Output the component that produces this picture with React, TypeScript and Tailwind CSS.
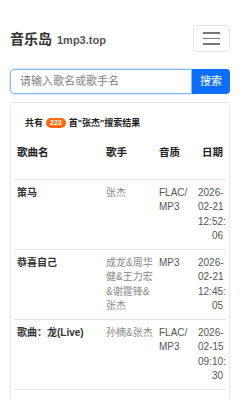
import React from "react";

const songs = [
  {
    name: "策马",
    artist: ["张杰"],
    quality: ["FLAC/", "MP3"],
    date: ["2026-", "02-21", "12:52:", "06"],
  },
  {
    name: "恭喜自己",
    artist: ["成龙&周华", "健&王力宏", "&谢霆锋&", "张杰"],
    quality: ["MP3"],
    date: ["2026-", "02-21", "12:45:", "05"],
  },
  {
    name: "歌曲：龙(Live)",
    artist: ["孙楠&张杰"],
    quality: ["FLAC/", "MP3"],
    date: ["2026-", "02-15", "09:10:", "30"],
  },
];

function Lines({ items }: { items: string[] }) {
  return (
    <>
      {items.map((t, i) => (
        <span key={i} className="block whitespace-nowrap">
          {t}
        </span>
      ))}
    </>
  );
}

export default function App() {
  return (
    <div className="w-[240px] h-[400px] overflow-hidden bg-white font-['Liberation_Sans','Noto_Sans_CJK_SC',sans-serif] text-[#333]">
      {/* Navbar */}
      <header className="flex items-center justify-between px-[10px] pt-[25px]">
        <a className="flex items-baseline gap-[5px] pt-[2px]">
          <span className="text-[14px] font-bold leading-[18px] text-[#333]">
            音乐岛
          </span>
          <span className="text-[11px] font-bold text-[#555]">1mp3.top</span>
        </a>
        <button className="flex h-[27px] w-[37px] flex-col items-center justify-center gap-[4px] rounded-[4px] border border-[#e6e6e6]">
          <span className="block h-[1.5px] w-[17px] bg-[#777]" />
          <span className="block h-[1.5px] w-[17px] bg-[#777]" />
          <span className="block h-[1.5px] w-[17px] bg-[#777]" />
        </button>
      </header>

      {/* Search */}
      <form className="mx-[10px] mt-[17px] flex h-[25px]">
        <input
          placeholder="请输入歌名或歌手名"
          className="min-w-0 flex-1 rounded-l-[4px] border border-[#86b7fe] px-[9px] text-[11px] text-[#333] shadow-[0_0_0_1px_rgba(13,110,253,0.15)] outline-none placeholder:text-[#808080]"
        />
        <button
          type="button"
          className="w-[38px] rounded-r-[4px] bg-[#0d6efd] text-[11px] text-white"
        >
          搜索
        </button>
      </form>

      {/* Results card */}
      <div className="mx-[10px] mt-[8px] rounded-[4px] border border-[#e8e8e8] px-[3px]">
        <p className="pl-[11px] pt-[14px] text-[9px] font-bold leading-[12px] text-[#222]">
          共有
          <span className="mx-[3px] inline-block rounded-full bg-[#fd6a0f] px-[4px] align-[1px] text-[7px] leading-[10px] text-white">
            223
          </span>
          首"张杰"搜索结果
        </p>

        <table className="w-[212px] table-fixed border-collapse text-[10px] leading-[14.5px]">
          <colgroup>
            <col className="w-[89px]" />
            <col className="w-[53px]" />
            <col className="w-[42px]" />
            <col className="w-[28px]" />
          </colgroup>
          <thead>
            <tr className="border-b border-[#e3e3e3]">
              <th className="h-[50px] px-[3px] pt-[16px] text-left align-top text-[10.5px] font-bold text-[#222]">
                歌曲名
              </th>
              <th className="h-[50px] px-[3px] pt-[16px] text-left align-top text-[10.5px] font-bold text-[#222]">
                歌手
              </th>
              <th className="h-[50px] px-[3px] pt-[16px] text-left align-top text-[10.5px] font-bold text-[#222]">
                音质
              </th>
              <th className="h-[50px] pl-0 pr-[3px] pt-[16px] text-right align-top text-[10.5px] font-bold text-[#222]">
                日期
              </th>
            </tr>
          </thead>
          <tbody>
            {songs.map((s) => (
              <tr key={s.name} className="border-b border-[#e3e3e3]">
                <td className="px-[3px] pb-[5px] pt-[6px] align-top font-bold text-[#333]">
                  {s.name}
                </td>
                <td className="px-[3px] pb-[5px] pt-[6px] align-top text-[#8a8a8a]">
                  <Lines items={s.artist} />
                </td>
                <td className="px-[3px] pb-[5px] pt-[6px] align-top text-[#555]">
                  <Lines items={s.quality} />
                </td>
                <td className="pb-[5px] pl-0 pr-[3px] pt-[6px] text-right align-top text-[#555]">
                  <Lines items={s.date} />
                </td>
              </tr>
            ))}
          </tbody>
        </table>
        <div className="h-[20px]" />
      </div>
    </div>
  );
}
